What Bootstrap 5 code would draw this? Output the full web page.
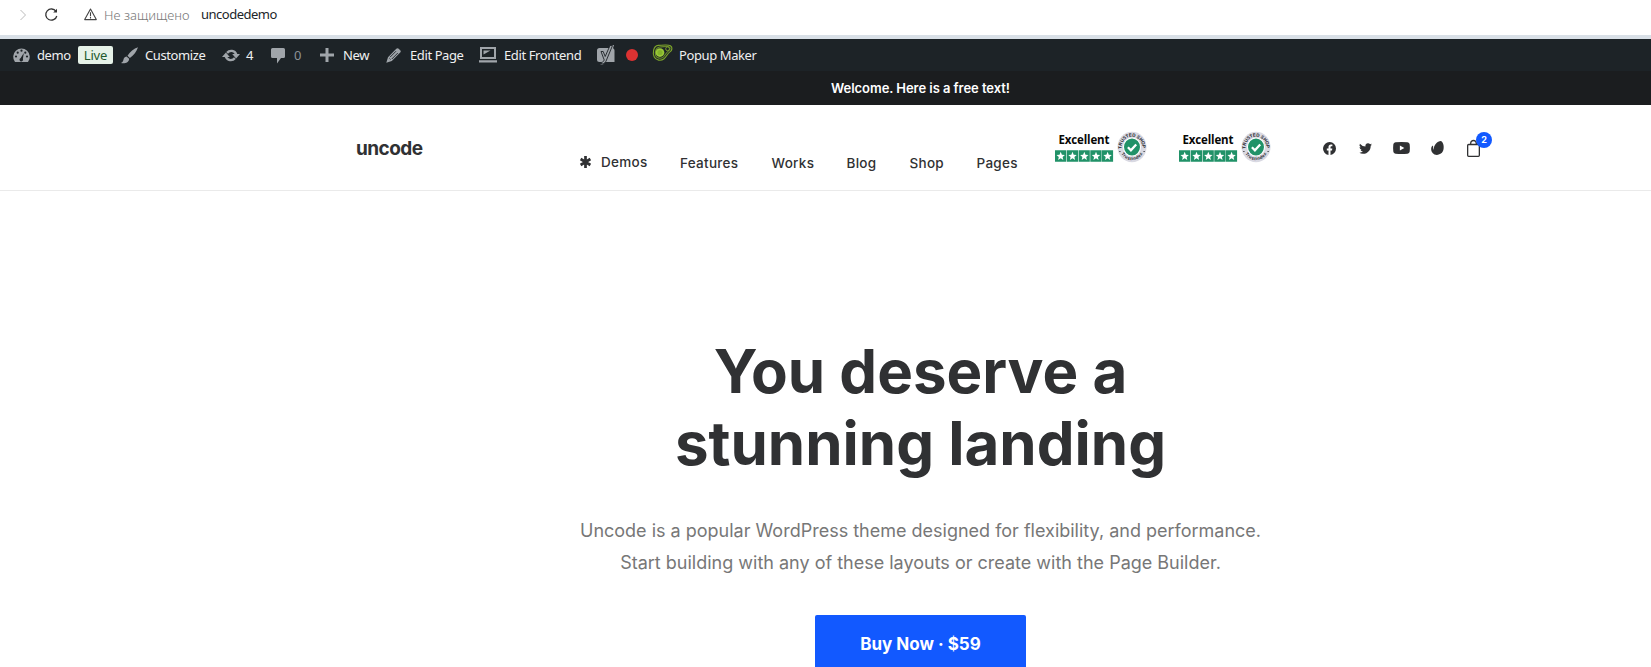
<!DOCTYPE html>
<html lang="en">
<head>
<meta charset="utf-8">
<meta name="viewport" content="width=device-width, initial-scale=1">
<title>uncodedemo</title>
<link href="https://cdn.jsdelivr.net/npm/bootstrap@5.3.0/dist/css/bootstrap.min.css" rel="stylesheet">
<style>
  html, body { overflow: hidden; height: 100%; }
  body { font-family: Inter, "Liberation Sans", sans-serif; background: #fff; color: #303133; }
  svg { display: block; flex: none; overflow: visible; }
  .ui-font { font-family: "Noto Sans", "Open Sans", sans-serif; font-size: 13px; line-height: 20px; white-space: nowrap; }
  .browser-bar { height: 39px; border-bottom: 4px solid #d9e0e7; padding: 0 0 6px 18px; }
  .not-secure { color: #777; font-weight: 300; width: 97px; letter-spacing: .03px; }
  .addr { letter-spacing: -.5px; margin-top: -1px; }
  .admin-bar { height: 32px; background: #1d2327; color: #f0f0f1; padding-left: 13px; letter-spacing: -.4px; }
  .admin-bar svg { fill: #a0a5aa; }
  .live-tag { background: #e6f2e8; color: #1f5a2e; width: 35px; height: 18px; line-height: 18px; border-radius: 2px; letter-spacing: -.2px; }
  .notice { height: 34px; padding-left: 190px; background: #1b1d1f; color: #fff; font-size: 13px; font-weight: 600; line-height: 34px; letter-spacing: -.05px; }
  .site-head { height: 86px; border-bottom: 1px solid #eaeaea; padding-left: 356px; }
  .brand { width: 224px; font-size: 19px; font-weight: 700; line-height: 24px; letter-spacing: -.55px; margin-top: 32px; }
  .menu { font-size: 13.5px; font-weight: 500; line-height: 20px; letter-spacing: .29px; margin-top: 48px; white-space: nowrap; }
  .trust { width: 124px; margin-top: 26px; }
  .social { margin-top: 32px; height: 22px; }
  .cart-count { width: 16px; height: 16px; left: 9px; top: -8px; background: #1259ff; color: #fff; font-size: 9px; font-weight: 700; line-height: 16px; }
  .hero { padding: 144px 0 0 190px; height: 477px; overflow: hidden; }
  .hero h1 { font-size: 60px; line-height: 72px; font-weight: 700; margin: 0 0 36px; }
  .hero p { font-size: 18px; line-height: 32px; color: #777; margin: 0 0 36px; }
  .buy { width: 211px; height: 60px; border-radius: 2px; background: #1259ff; color: #fff; font-size: 17px; font-weight: 700; line-height: 58px; padding: 0; border: 0; }
</style>
</head>
<body>
<svg width="0" height="0" class="position-absolute" aria-hidden="true">
  <defs>
    <path id="arcTop" d="M4.300 18.200A10.400 11 0 1 1 24.700 18.200"/>
    <path id="arcBottom" d="M1.900 15.500a12.600 13.100 0 0 0 25.200 0"/>
    <path id="star" d="M6 1.800l1.200 2.900 3 .2-2.300 2 .7 3L6 8.300 3.400 9.900l.7-3-2.300-2 3-.2z"/>
    <g id="rating">
      <text x="3.500" y="13" font-family="Open Sans, Noto Sans, sans-serif" font-weight="700" font-size="11.500" fill="#080808" textLength="51">Excellent</text>
      <g fill="#219268"><path d="M0 19.300h11.200v11.500H0zM11.800 19.300H23v11.500H11.800zM23.600 19.300h11.200v11.500H23.600zM35.300 19.300h11.200v11.500H35.300zM46.900 19.300h11.200v11.500H46.900z"/></g>
      <g fill="#fff"><use href="#star" x="-.3" y="19"/><use href="#star" x="11.500" y="19"/><use href="#star" x="23.300" y="19"/><use href="#star" x="35" y="19"/><use href="#star" x="46.600" y="19"/></g>
      <g transform="translate(62.5 .5)">
        <ellipse cx="14.500" cy="15.500" rx="14.500" ry="15.300" fill="#d9d9e2"/>
        <ellipse cx="14.500" cy="15.500" rx="9" ry="9.600" fill="#fff"/>
        <ellipse cx="14.500" cy="15.500" rx="8" ry="8.600" fill="#219268"/>
        <path d="M10.400 15.800l3 3 5.300-5.800" fill="none" stroke="#fff" stroke-width="2.300"/>
        <g font-family="Liberation Sans, sans-serif" font-weight="700" fill="#17181d">
          <text font-size="4.600"><textPath href="#arcTop" startOffset="1" textLength="35">TRUSTED SHOP</textPath></text>
          <text font-size="4.400"><textPath href="#arcBottom" startOffset="7" textLength="26">Trustindex</textPath></text>
        </g>
        <circle cx="2.400" cy="20" r=".6"/><circle cx="26.600" cy="20" r=".6"/>
      </g>
    </g>
  </defs>
</svg>

<div class="browser-bar ui-font d-flex align-items-center">
  <svg width="10" height="12" viewBox="0 0 10 12" fill="none" stroke="#bbb"><path d="M2.500 1l5 5-5 5"/></svg>
  <svg style="margin:0 26px 0 16px" width="14" height="14" viewBox="0 0 14 14" fill="none" stroke="#333" stroke-width="1.300"><path d="M12 3.400a5.600 5.600 0 1 0 .8 4.600"/><path d="M13 .8v3.600H9.200z" fill="#333" stroke="none"/></svg>
  <svg width="13" height="13" viewBox="0 0 13 13" fill="none" stroke="#444" stroke-width="1.100"><path d="M6.500 1L12.300 11.600H.7z" stroke-linejoin="round"/><path d="M6.500 4.300v4M6.500 9.100v1.300"/></svg>
  <span class="not-secure" style="margin-left:7px">Не защищено</span>
  <span class="addr text-dark">uncodedemo</span>
</div>

<div class="admin-bar ui-font d-flex align-items-center">
  <svg width="17" height="14" viewBox="0 0 17 14" style="margin-right:7px"><path d="M2 14A8.300 8.300 0 1 1 15 14z"/><g fill="#1d2327"><circle cx="3" cy="8.500" r="1.100"/><circle cx="4.700" cy="4.700" r="1.100"/><circle cx="8.500" cy="2.700" r="1.100"/><circle cx="12.300" cy="4.700" r="1.100"/><circle cx="14" cy="8.500" r="1.100"/><path d="M10.800 5L9.900 10.800a1.800 1.800 0 1 1-2.200-.9z"/></g></svg>
  <span style="width:41px">demo</span>
  <span class="live-tag text-center">Live</span>
  <svg width="17" height="17" viewBox="0 0 17 17" style="margin:0 7px 0 8px"><path d="M17 .3C13 1.600 8.800 5 6.500 8.700l2.400 2.300C12.700 8.200 15.700 4.500 17 .3zM5.600 9.500C3.300 9.600 2.700 11.500 2.400 13 2.100 14.500 1 15.600 0 16c3.200.8 8.200 0 8.100-4.200z"/></svg>
  <span style="width:77px">Customize</span>
  <svg width="18" height="15" viewBox="0 0 18 15" style="margin-right:6px"><path d="M4.200 4.100A6.500 6.500 0 0 1 15.300 6H18l-3.900 4.400L10.200 6h2.500A4.100 4.100 0 0 0 6 5.700zM13.800 10.900A6.500 6.500 0 0 1 2.700 9H0l3.900-4.400L7.800 9H5.300a4.100 4.100 0 0 0 6.700.3z"/></svg>
  <span style="width:25px">4</span>
  <svg width="14" height="16" viewBox="0 0 14 16" style="margin:2px 9px 0 0"><path d="M1.500 0h11A1.500 1.500 0 0 1 14 1.500v7a1.500 1.500 0 0 1-1.500 1.500H10l-4 5.500V10H1.500A1.500 1.500 0 0 1 0 8.500v-7A1.500 1.500 0 0 1 1.500 0z"/></svg>
  <span style="width:26px;color:#8c9196">0</span>
  <svg width="14" height="14" viewBox="0 0 14 14" style="margin-right:9px"><path d="M5.500 0h3v5.500H14v3H8.500V14h-3V8.500H0v-3h5.500z"/></svg>
  <span style="width:43px">New</span>
  <svg width="15" height="15" viewBox="0 0 15 15" style="margin-right:9px"><path d="M10.300.8c.8-.8 1.700-.8 2.400-.1l1.500 1.500c.7.7.8 1.600 0 2.400L5.800 13 .3 14.700 2 9.200z"/><path d="M4 9.200l6-6M5.800 11l6-6M3.500 10.500l1 1" stroke="#1d2327" stroke-width=".9"/></svg>
  <span style="width:69px">Edit Page</span>
  <svg width="18" height="16" viewBox="0 0 18 16" style="margin-right:7px"><path fill-rule="evenodd" d="M1 0h16v12H1zM3 2v8h12V2zM0 13.200h18V15.500H0zM4.500 3.500h7l-7 4z"/></svg>
  <span style="width:93px">Edit Frontend</span>
  <svg width="18" height="20" viewBox="0 0 18 20" style="margin-right:11px"><path d="M2.500 3h10L15 0h2l-1 3.300a2.500 2.500 0 0 1 1.500 2.200V17H8l-2 2.500H3.500L5 17H2.500A2.500 2.500 0 0 1 0 14.500v-9A2.500 2.500 0 0 1 2.500 3z"/><path d="M4 6.500h2.200l2 5L13 .5h2.500L9.500 15c-1 2.700-2.500 4-5 4v-1.600c1.600-.2 2.200-1.100 2.700-2.500z" fill="#a0a5aa" stroke="#1d2327" stroke-width=".9"/></svg>
  <span class="rounded-circle" style="width:12px;height:12px;margin-right:15px;background:#dc3232"></span>
  <svg width="20" height="18" viewBox="0 0 21 18" style="margin:-4px 6px 0 0"><g fill="none" stroke="#7da52b" stroke-width="1.200"><path d="M5.500 1C10 .8 16 0 18.300 1.300c2.500 1.700 1.800 5-.5 6.500-2.800 2-3.800 5.500-6.500 7.500-3 2.300-8.300 1.500-10-2C-.5 9.500 0 1.500 5.500 1z"/><path d="M7 2.700c3.500-.4 8-1.200 10-.1 1.700 1.100 1 3-1 4.400-2.500 1.900-3.500 5-5.600 6.600-2.300 1.800-6.300.8-7.500-1.700C1.700 8.500 2.600 3.300 7 2.700z" stroke="#68872b"/></g><circle cx="7.300" cy="8.500" r="4.600" fill="#9ac838"/><circle cx="7.300" cy="8.500" r="2.700" fill="#84b32c"/><circle cx="15.300" cy="4.600" r="2" fill="#1d2327" stroke="#7da52b"/></svg>
  <span>Popup Maker</span>
</div>

<div class="site">
  <div class="notice text-center">Welcome. Here is a free text!</div>
  <header class="site-head d-flex align-items-start">
    <div class="brand">uncode</div>
    <nav class="menu d-flex">
      <svg width="11" height="12" viewBox="0 0 11 12" style="margin:3px 10px 0 0" stroke="#303133" stroke-width="2.700"><path d="M5.500 0v12M.6 3l9.800 6M10.400 3L.6 9"/></svg>
      <span style="width:79px;margin-top:-1px">Demos</span>
      <span style="width:91.500px">Features</span>
      <span style="width:75px">Works</span>
      <span style="width:63px">Blog</span>
      <span style="width:67px">Shop</span>
      <span style="width:78.500px">Pages</span>
    </nav>
    <div class="trust"><svg width="92" height="32"><use href="#rating"/></svg></div>
    <div class="trust"><svg width="92" height="32"><use href="#rating"/></svg></div>
    <div class="social d-flex align-items-center" style="margin-left:20px">
      <svg width="13" height="13" viewBox="0 0 16 16" fill="#303133" style="margin-right:23px"><path d="M16 8.050A8 8 0 1 0 6.750 16v-5.600H4.700V8.050h2.050V6.300c0-2 1.200-3.150 3-3.150.9 0 1.800.15 1.800.15v2h-1c-1 0-1.300.6-1.300 1.250v1.500h2.200l-.35 2.350H9.250V16A8 8 0 0 0 16 8.050z"/></svg>
      <svg width="13" height="11" viewBox="0 1.500 16 13" fill="#303133" style="margin-right:21px"><path d="M5.030 14.500c6.040 0 9.340-5 9.340-9.340v-.42A6.700 6.700 0 0 0 16 3.040a6.500 6.500 0 0 1-1.890.52A3.300 3.300 0 0 0 15.560 1.740a6.500 6.500 0 0 1-2.090.8A3.290 3.290 0 0 0 7.880 5.540 9.300 9.300 0 0 1 1.110 2.100a3.290 3.290 0 0 0 1.020 4.380A3.300 3.300 0 0 1 .64 6.070v.04a3.290 3.290 0 0 0 2.630 3.220 3.200 3.200 0 0 1-1.480.06 3.290 3.290 0 0 0 3.070 2.280A6.600 6.600 0 0 1 0 13.030a9.300 9.300 0 0 0 5.030 1.470z"/></svg>
      <svg width="17" height="12" viewBox="0 0 17 12" style="margin-right:21px"><path fill="#303133" d="M2.500.3Q8.500-.3 14.500.3 16.500.5 16.700 2.500q.4 3.500 0 7-.2 2-2.200 2.200-6 .6-12 0Q.5 11.500.3 9.500q-.4-3.500 0-7Q.5.5 2.500.3z"/><path fill="#fff" d="M6.900 3.400v5.200L11.300 6z"/></svg>
      <svg width="13" height="14" viewBox="0 0 13 14" fill="#303133" style="margin-right:23px"><path d="M9.800 0c2.800 1 3.700 6.600 2.200 10-1.500 3.300-5.400 4.700-8.500 3.400C1 12.300-.2 9.500.2 7c.2-1 .6-1.800 1.200-2.200.5-.3.800-.1.700.5-.2 1.400 0 2.600.6 3.600C2.500 4 6.500.2 9.800 0z"/></svg>
      <div class="position-relative">
        <svg width="13" height="17" viewBox="0 0 13 17" fill="none" stroke="#303133" stroke-width="1.300"><rect x=".65" y="4.500" width="11.700" height="11.800" rx="1"/><path d="M3.700 4.500V3.300a2.800 2.800 0 0 1 5.600 0v1.200"/></svg>
        <span class="cart-count position-absolute rounded-circle text-center">2</span>
      </div>
    </div>
  </header>
  <main class="hero text-center">
    <h1>You deserve a<br>stunning landing</h1>
    <p>Uncode is a popular WordPress theme designed for flexibility, and performance.<br>Start building with any of these layouts or create with the Page Builder.</p>
    <a class="buy btn" href="#">Buy Now · $59</a>
  </main>
</div>
<script src="https://cdn.jsdelivr.net/npm/bootstrap@5.3.0/dist/js/bootstrap.bundle.min.js"></script>
</body>
</html>
